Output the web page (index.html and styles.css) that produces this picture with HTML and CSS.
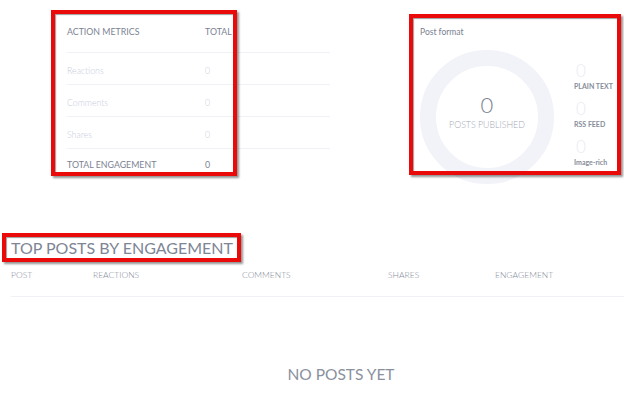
FILE: index.html
```html
<!DOCTYPE html>
<html lang="en">
<head>
<meta charset="utf-8">
<title>Engagement</title>
<link rel="stylesheet" href="styles.css">
</head>
<body>
<main class="page">
  <section class="top">
    <div class="metrics">
      <div class="mrow mhead"><span>ACTION METRICS</span><span>TOTAL</span></div>
      <div class="mrow faint"><span>Reactions</span><span>0</span></div>
      <div class="mrow faint"><span>Comments</span><span>0</span></div>
      <div class="mrow faint"><span>Shares</span><span>0</span></div>
      <div class="mrow mtotal"><span>TOTAL ENGAGEMENT</span><span>0</span></div>
    </div>
    <div class="format">
      <div class="ftitle">Post format</div>
      <div class="fbody">
        <div class="donut">
          <div class="dnum">0</div>
          <div class="dlabel">POSTS PUBLISHED</div>
        </div>
        <ul class="legend">
          <li><span class="lnum">0</span><span class="llabel">PLAIN TEXT</span></li>
          <li><span class="lnum">0</span><span class="llabel">RSS FEED</span></li>
          <li><span class="lnum">0</span><span class="llabel">Image-rich</span></li>
        </ul>
      </div>
    </div>
  </section>
  <section class="posts">
    <h2 class="ptitle">TOP POSTS BY ENGAGEMENT</h2>
    <div class="cols">
      <span>POST</span><span>REACTIONS</span><span>COMMENTS</span><span>SHARES</span><span>ENGAGEMENT</span>
    </div>
    <div class="empty">NO POSTS YET</div>
  </section>
  <div class="mark mark-metrics"></div>
  <div class="mark mark-format"></div>
  <div class="mark mark-title"></div>
</main>
</body>
</html>
```
FILE: styles.css
```css
* { box-sizing: border-box; }
html, body { margin: 0; padding: 0; background: #fff; }
body {
  font-family: Lato, "Open Sans", "Liberation Sans", sans-serif;
  font-weight: 400;
  color: #7a8191;
  width: 624px;
  height: 405px;
  overflow: hidden;
}
.page { position: relative; width: 624px; height: 405px; }

.top { display: flex; height: 232px; }

.metrics { margin-left: 67px; margin-top: 11px; width: 263px; }
.mrow {
  display: grid;
  grid-template-columns: 138px 1fr;
  align-items: center;
  height: 32px;
  font-size: 8.8px;
  font-weight: 300;
  padding-top: 3px;
  border-bottom: 1px solid #eff1f6;
}
.mhead { height: 42px; padding-top: 0; color: #7b8292; font-weight: 400; }
.faint { color: #c8ccdc; }
.mtotal { border-bottom: none; color: #7b8292; height: 30px; font-weight: 400; padding-top: 0; }

.format { margin-left: 80px; padding-top: 14px; width: 214px; }
.ftitle { padding: 12px 0 0 10px; line-height: 12px; font-size: 8.5px; color: #7a8191; height: 36px; }
.fbody { display: flex; padding-left: 10px; gap: 20px; }
.donut {
  width: 134px; height: 134px;
  border-radius: 50%;
  border: 16px solid #f1f3f8;
  display: flex; flex-direction: column; align-items: center; justify-content: center;
  padding-bottom: 10px;
  flex: none;
}
.dnum { font-size: 22px; line-height: 22px; font-weight: 300; color: #7a8191; }
.dlabel { font-size: 8.8px; line-height: 12px; font-weight: 300; color: #a3a8b5; margin-top: 3px; }

.legend { list-style: none; margin: 11px 0 0; padding: 0; display: flex; flex-direction: column; gap: 8px; }
.legend li { display: flex; flex-direction: column; height: 30px; }
.lnum { font-size: 17px; line-height: 20px; font-weight: 300; color: #e8ebf3; padding-left: 2px; }
.llabel { font-size: 7px; line-height: 10px; font-weight: 700; color: #878d9a; }

.posts { padding-left: 11px; }
.ptitle { margin: 0; font-size: 16px; font-weight: 400; line-height: 32px; color: #7e8595; height: 32px; }
.cols {
  display: grid;
  grid-template-columns: 82px 149px 146px 107px 1fr;
  align-items: center;
  height: 33px;
  padding-bottom: 11px;
  font-size: 8.5px;
  font-weight: 300;
  color: #858b99;
  border-bottom: 1px solid #eff1f6;
}
.empty { text-align: center; padding-left: 47px; margin-top: 67px; font-size: 15.5px; line-height: 20px; color: #8a909d; font-weight: 400; }

.mark {
  position: absolute;
  border: 4px solid #ea0a0a;
  box-shadow: 2px 2px 2px rgba(60,60,60,.55), inset 1px 1px 1px rgba(60,60,60,.5);
  pointer-events: none;
}
.mark-metrics { left: 51px; top: 10px; width: 186px; height: 166px; }
.mark-format { left: 409px; top: 14px; width: 212px; height: 161px; }
.mark-title { left: 2px; top: 233px; width: 239px; height: 29px; }
```
